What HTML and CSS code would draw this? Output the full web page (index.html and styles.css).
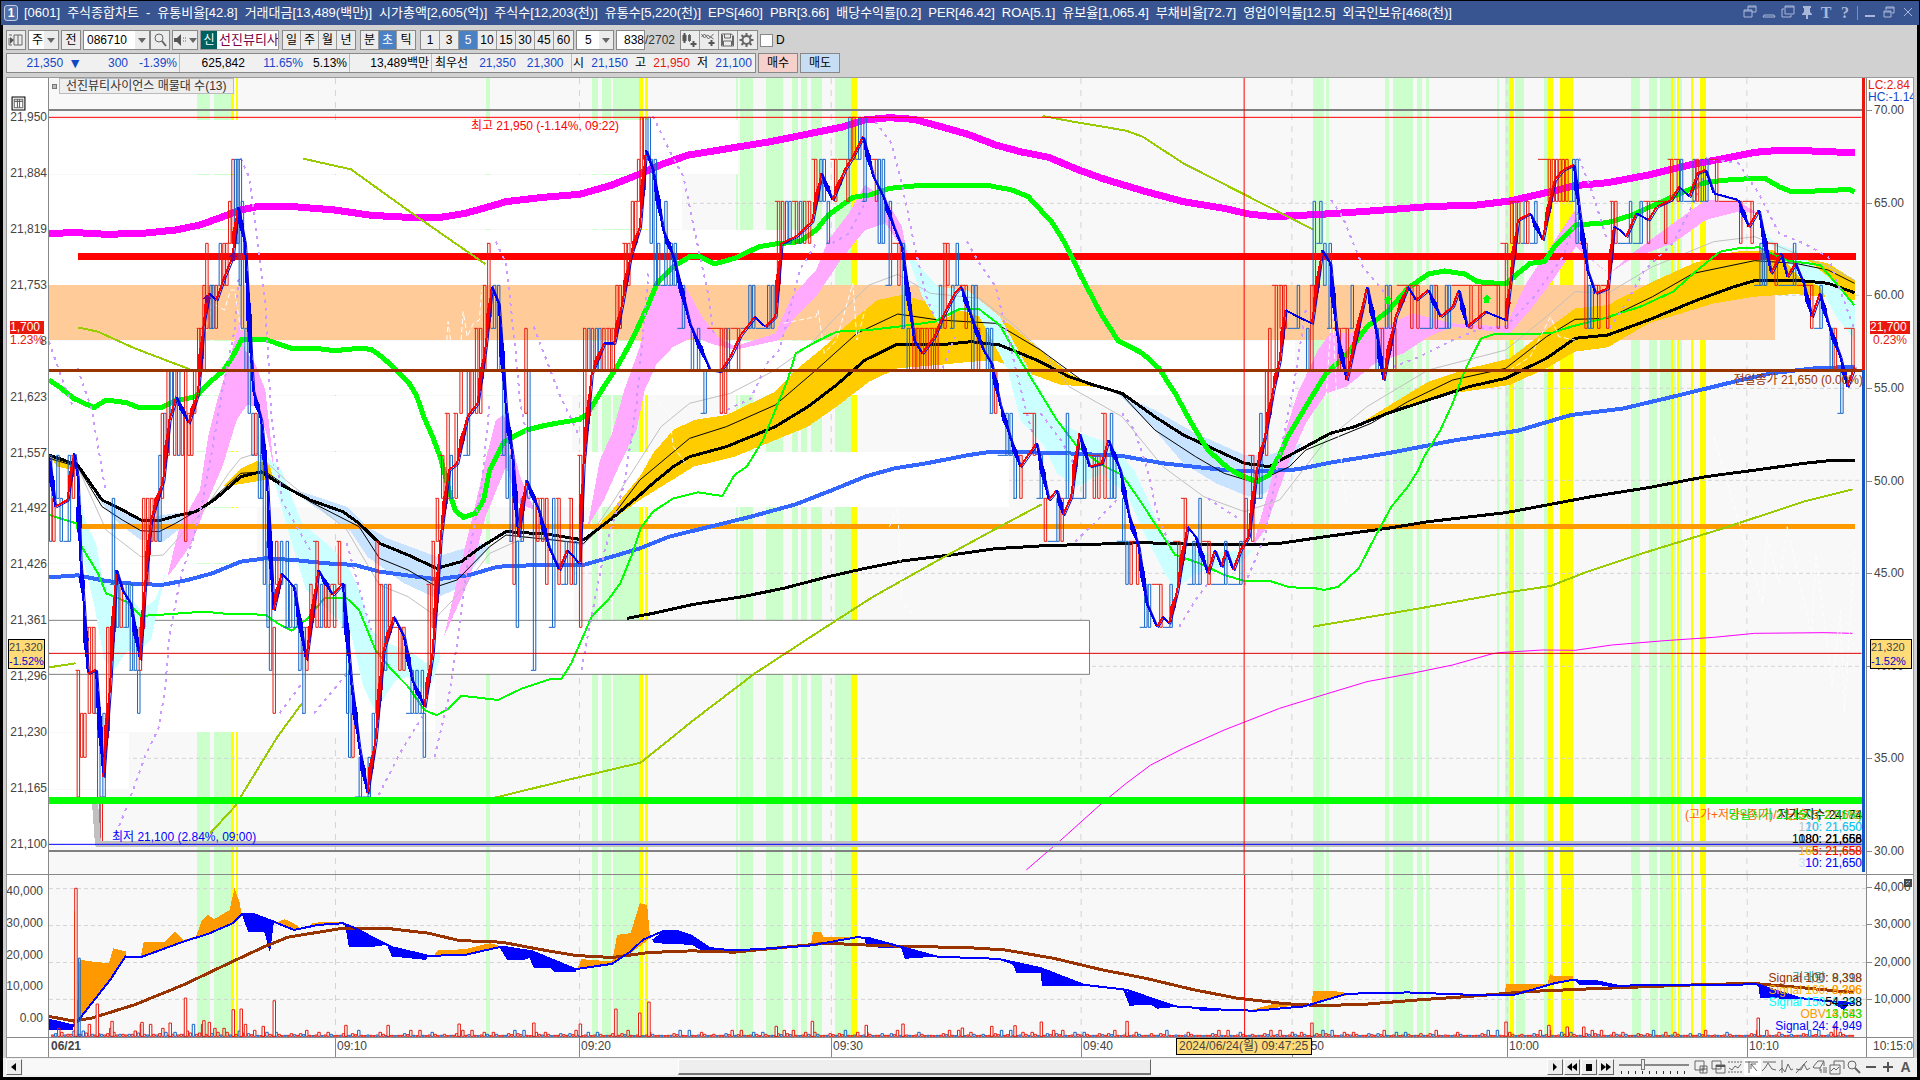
FILE: index.html
```html
<!DOCTYPE html>
<html lang="ko">

<head>
    <meta charset="utf-8">
    <title>[0601] 주식종합차트</title>
    <link rel="stylesheet" href="styles.css">
</head>

<body>
    <header class="titlebar">
        <span class="winNo">1</span>
        <h1><span>[0601]</span><span>주식종합차트</span><span>-</span><span>유통비율[42.8]</span><span>거래대금[13,489(백만)]</span><span>시가총액[2,605(억)]</span><span>주식수[12,203(천)]</span><span>유통수[5,220(천)]</span><span>EPS[460]</span><span>PBR[3.66]</span><span>배당수익률[0.2]</span><span>PER[46.42]</span><span>ROA[5.1]</span><span>유보율[1,065.4]</span><span>부채비율[72.7]</span><span>영업이익률[12.5]</span><span>외국인보유[468(천)]</span></h1>
        <div class="winButtons">
            <button type="button" aria-label="dock"><svg viewBox="0 0 14 14"><path d="M5 1h8v6H9M5 1v4M1 5h8v7H1zM1 6h8M5 2h8" /></svg></button>
            <button type="button" aria-label="hide"><svg viewBox="0 0 14 14"><path d="M2 10h10l1 2H1z" /></svg></button>
            <button type="button" aria-label="popup"><svg viewBox="0 0 14 14"><path d="M4 1h9v8H4zM4 2h9M3 4H1v8h9v-2" /></svg></button>
            <button type="button" aria-label="pin"><svg viewBox="0 0 14 14"><path class="solid" d="M3 1h8v2h-1v4l2 2v1H8v4H6v-4H2V9l2-2V3H3z" /></svg></button>
            <button type="button" class="serif">T</button>
            <button type="button" class="serif">?</button>
            <i></i>
            <button type="button" aria-label="minimize"><svg viewBox="0 0 14 14"><path class="solid" d="M2 10h10v2H2z" /></svg></button>
            <button type="button" aria-label="restore"><svg viewBox="0 0 14 14"><path d="M4 2h8v6h-2M4 2v3M4 3h8M2 6h7v6H2zM2 7h7" /></svg></button>
            <button type="button" aria-label="close"><svg viewBox="0 0 14 14"><path d="M3 3l8 8M11 3l-8 8" /></svg></button>
        </div>
    </header>

    <main class="window">
        <div class="toolbar">
            <button type="button" class="tool gapAfter" aria-label="menu"><svg viewBox="0 0 16 16"><path d="M1 3h3M6 3h8v10H6zM10 3v10M1 6v7M1 13h3" /><path class="solid" d="M2 5l4 3-4 4z" /></svg></button>
            <span class="combo comboKind"><select aria-label="종류">
                    <option>주</option>
                </select></span>
            <button type="button" class="tool gapAfter">전</button>
            <span class="combo comboCode"><input type="text" value="086710" aria-label="종목코드"></span>
            <button type="button" class="tool gapAfter" aria-label="search"><svg viewBox="0 0 16 16"><circle cx="7" cy="6" r="4" /><path stroke-width="2" d="M10 9l4 5" /></svg></button>
            <button type="button" class="tool speaker gapAfter" aria-label="sound"><svg viewBox="0 0 16 16"><path class="solid" d="M1 6h3l4-4v12l-4-4H1z" /><path d="M10 6h1M12 6h1M10 9h1M12 9h1" /></svg><b></b></button>
            <span class="stock"><em>신</em><strong>선진뷰티사</strong></span>
            <div class="group">
                <button type="button">일</button><button type="button">주</button><button type="button">월</button><button type="button">년</button>
            </div>
            <div class="group">
                <button type="button">분</button><button type="button" class="on">초</button><button type="button">틱</button>
            </div>
            <div class="group wide">
                <button type="button">1</button><button type="button">3</button><button type="button" class="on">5</button><button type="button">10</button><button type="button">15</button><button type="button">30</button><button type="button">45</button><button type="button">60</button>
            </div>
            <span class="combo comboStep"><select aria-label="간격">
                    <option>5</option>
                </select></span>
            <input type="text" class="count" value="838" aria-label="봉 개수"><span class="total">/2702</span>
            <div class="group wide icons">
                <button type="button" aria-label="add chart"><svg viewBox="0 0 16 16"><path class="solid" d="M1 3h4v6H1zM2 1h2v10H2z" /><path d="M8 2v8M9 3v6M7 3v6" /><path class="solid" d="M11 9h2v2h2v2h-2v2h-2v-2H9v-2h2z" /></svg></button>
                <button type="button" aria-label="add indicator"><svg viewBox="0 0 16 16"><path d="M1 5l3-3 4 5 5-5M1 2l3 4 3-3 6 4" /><path class="solid" d="M10 8h2v2h2v2h-2v2h-2v-2H8v-2h2z" /></svg></button>
                <button type="button" aria-label="save"><svg viewBox="0 0 16 16"><path d="M2 2h10l2 2v10H2zM5 2v4h6V2M4 14V9h8v5M3 3v10M13 4v9" /></svg></button>
                <button type="button" aria-label="settings"><svg viewBox="0 0 16 16"><circle cx="8" cy="8" r="4" stroke-width="2" /><path stroke-width="2" d="M8 1v3M8 12v3M1 8h3M12 8h3M3 3l2 2M11 11l2 2M3 13l2-2M11 5l2-2" /></svg></button>
            </div>
            <label class="check"><input type="checkbox">D</label>
        </div>

        <div class="quote">
            <div class="quoteBox">
                <span class="q1 down"><b>21,350</b><b class="mark">▼</b><b>300</b><b>-1.39%</b></span>
                <span class="q2"><b>625,842</b><b class="down">11.65%</b><b>5.13%</b></span>
                <span class="q3">13,489백만</span>
                <span class="q4">최우선 <b class="down">21,350</b> <b class="down">21,300</b></span>
                <span class="q5">시 <b class="down">21,150</b> 고 <b class="up">21,950</b> 저 <b class="down">21,100</b></span>
            </div>
            <button type="button" class="buy">매수</button>
            <button type="button" class="sell">매도</button>
        </div>

        <section class="chart">
            <div class="axis leftAxis">
                <svg class="gridIcon" viewBox="0 0 14 14"><path d="M1 1h12v12H1z" class="frame" /><path d="M3 3h8v8H3zM6 3v8M8 3v8M3 5h8" /></svg>
                <span>21,950</span><span>21,884</span><span>21,819</span><span>21,753</span><span>21,688</span><span>21,623</span><span>21,557</span><span>21,492</span><span>21,426</span><span>21,361</span><span>21,296</span><span>21,230</span><span>21,165</span><span>21,100</span>
                <div class="nowTag"><b>1,700</b><i>1.23%</i></div>
                <div class="crossTag">21,320<i>-1.52%</i></div>
            </div>

            <div class="plot">
                <svg id="price" viewBox="120 24 4453 2388" preserveAspectRatio="none"></svg>
                <span class="legend"><i></i><b>선진뷰티사이언스 매물대 수(13)</b></span>
                <span class="note high">최고 21,950 (-1.14%, 09:22)</span>
                <span class="note low">최저 21,100 (2.84%, 09:00)</span>
                <span class="note prev">전일종가 21,650 (0.00%)</span>
                <div class="values">
                    <p><span class="cOrange">(고가+저가+종가)/3 단순 5: 21,683</span><span class="cBlack">저가 지수 24: 74</span><span class="cGreen">당일시가 21,150 (-2.31%)</span></p>
                    <p><span class="cSilver">120: 21,650</span><span class="cSky">10: 21,650</span></p>
                    <p><span class="cBlack">1080: 21,668</span><span class="cBlack">180: 21,656</span></p>
                    <p><span class="cYellow">160: 21,658</span><span class="cRed">5: 21,658</span></p>
                    <p><span class="cPale">310: 21,650</span><span class="cBlue">10: 21,650</span></p>
                </div>
            </div>

            <div class="axis rightAxis">
                <div class="limits"><b class="up">LC:2.84</b><b class="down">HC:-1.14</b></div>
                <span>70.00</span><span>65.00</span><span>60.00</span><span>55.00</span><span>50.00</span><span>45.00</span><span>40.00</span><span>35.00</span><span>30.00</span>
                <div class="nowTag"><b>21,700</b><i>0.23%</i></div>
                <div class="crossTag">21,320<i>-1.52%</i></div>
            </div>

            <div class="axis leftAxis lower"><span>40,000</span><span>30,000</span><span>20,000</span><span>10,000</span><span>0.00</span></div>
            <div class="plot">
                <svg id="volume" viewBox="80 45 2968 487" preserveAspectRatio="none"></svg>
                <div class="values">
                    <p><span class="cTeal">거래량: 9,318</span><span class="cBrown">Signal 100: 8,398</span></p>
                    <p><span class="cYellow">Signal 160: 9,396</span><span class="cAmber">8,396</span></p>
                    <p><span class="cCyan">Signal 150: 9,298</span><span class="cBlack">54,238</span></p>
                    <p><span class="cAmber">OBV: 4,683</span><span class="cGreen">13,643</span></p>
                    <p><span class="cBlue">Signal 24: 4,949</span></p>
                </div>
            </div>
            <div class="axis rightAxis lower"><button type="button" class="closePane" aria-label="close pane">×</button><span>40,000</span><span>30,000</span><span>20,000</span><span>10,000</span></div>

            <div class="axis corner"></div>
            <div class="times">
                <b>06/21</b><span>09:10</span><span>09:20</span><span>09:30</span><span>09:40</span><span>09:50</span><span>10:00</span><span>10:10</span>
                <div class="dateTag">2024/06/24(월) 09:47:25</div>
            </div>
            <div class="axis corner end">10:15:0</div>
        </section>

        <footer class="bottom">
            <button type="button" class="raised" aria-label="scroll left"><svg viewBox="0 0 14 14"><path class="black" d="M9 3v8L4 7z" /></svg></button>
            <div class="track"><div class="thumb"></div></div>
            <button type="button" class="raised" aria-label="play"><svg viewBox="0 0 14 14"><path class="black" d="M5 3l4 4-4 4z" /></svg></button>
            <button type="button" class="raised" aria-label="rewind"><svg viewBox="0 0 14 14"><path class="black" d="M7 3v8L2 7zM12 3v8L7 7z" /></svg></button>
            <button type="button" class="raised" aria-label="stop"><svg viewBox="0 0 14 14"><path class="black" d="M4 4h6v7H4z" /></svg></button>
            <button type="button" class="raised" aria-label="forward"><svg viewBox="0 0 14 14"><path class="black" d="M2 3v8l5-4zM7 3v8l5-4z" /></svg></button>
            <div class="speed"><input type="range" min="0" max="9" value="3" aria-label="speed"></div>
            <div class="draw">
                <button type="button" aria-label="new"><svg viewBox="0 0 16 16"><path d="M2 2h9v9H2zM7 7h7v7H7zM10 7v7M7 10h7" /></svg></button>
                <button type="button" aria-label="copy"><svg viewBox="0 0 16 16"><path d="M2 2h9v8H2zM6 6h9v8H6z" /><path class="solid" d="M6 6h9v2H6z" /></svg></button>
                <button type="button" aria-label="range"><svg viewBox="0 0 16 16"><path stroke-dasharray="2 1" d="M1 3h14M1 13h14" /><path d="M2 9l3 2 3-4 3 2 3-4" /></svg></button>
                <button type="button" class="on" aria-label="cursor"><svg viewBox="0 0 16 16"><path d="M1 3h13M5 2v12M7 5l6 7M7 5h5M7 5v5" /></svg></button>
                <button type="button" aria-label="top line"><svg viewBox="0 0 16 16"><path d="M2 3h13M1 12l3-3 3-5 4 6 4 1" /></svg></button>
                <button type="button" aria-label="vertical line"><svg viewBox="0 0 16 16"><path d="M4 1v13M1 12l3-3 3 4 3-8 3 6 2-1" /></svg></button>
                <button type="button" aria-label="trend"><svg viewBox="0 0 16 16"><path d="M1 14L12 2M1 10l5 1 3-6 3 6 3-2" /></svg></button>
                <button type="button" aria-label="erase all"><svg viewBox="0 0 16 16"><path d="M1 8l5-6h6l-4 7H2zM8 9v3M12 3v4M9 14v-4M12 8v6M14 8v6" /></svg></button>
                <button type="button" aria-label="images"><svg viewBox="0 0 16 16"><path d="M5 2h10v8M1 6h10v9H1zM2 12l3-3 2 2 3-3M5 2v4" /></svg></button>
                <button type="button" aria-label="zoom"><svg viewBox="0 0 16 16"><circle cx="6" cy="6" r="4" /><path stroke-width="2" d="M9 9l5 5" /></svg></button>
                <button type="button" aria-label="smaller"><svg viewBox="0 0 16 16"><path class="solid" d="M3 7h10v2H3z" /></svg></button>
                <button type="button" aria-label="larger"><svg viewBox="0 0 16 16"><path class="solid" d="M3 7h4V3h2v4h4v2H9v4H7V9H3z" /></svg></button>
                <button type="button" class="auto">A</button>
            </div>
        </footer>
    </main>
    <script src="chart.js"></script>
</body>

</html>
```
FILE: styles.css
```css
* {
    box-sizing: border-box;
}

body {
    margin: 0;
    padding: 1px 1px 3px;
    height: 100vh;
    display: flex;
    flex-direction: column;
    background-color: #000;
    font-family: "Liberation Sans", "Noto Sans CJK KR", sans-serif;
    font-size: 12px;
    line-height: 14px;
    color: #000;
    overflow: hidden;
}

button,
input,
select {
    font: inherit;
    color: inherit;
    margin: 0;
    padding: 0;
}

b,
i,
em {
    font-weight: normal;
    font-style: normal;
}

svg {
    fill: none;
    stroke: #666;
}

svg .solid {
    fill: #555;
    stroke: none;
}

svg .black {
    fill: #000;
    stroke: none;
}

.up {
    color: #e8190c;
}

.down {
    color: #1446c8;
}

/* title bar */
.titlebar {
    height: 24px;
    display: flex;
    align-items: center;
    background-color: #395591;
    color: #fff;
    padding: 0 4px 0 3px;
    gap: 6px;
}

.titlebar h1 {
    flex: 1;
    display: flex;
    gap: 7px;
    margin: 0;
    font-size: 13px;
    font-weight: normal;
    white-space: nowrap;
    overflow: hidden;
}

.winNo {
    width: 14px;
    height: 16px;
    border: 1px solid #c5cfe5;
    border-radius: 3px;
    background-color: #5570a8;
    text-align: center;
    font-weight: bold;
}

.winButtons {
    display: flex;
    align-items: center;
    gap: 5px;
}

.winButtons button {
    width: 14px;
    height: 16px;
    border: 0;
    background: none;
    color: #a9b8d8;
}

.winButtons svg {
    width: 14px;
    height: 14px;
    stroke: #a9b8d8;
}

.winButtons .solid {
    fill: #a9b8d8;
}

.winButtons .serif {
    font-family: "Liberation Serif", serif;
    font-weight: bold;
    font-size: 16px;
}

.winButtons i {
    width: 1px;
    height: 14px;
    background-color: #8090a8;
}

/* toolbar */
.window {
    flex: 1;
    min-height: 0;
    margin: 0 2px;
    display: flex;
    flex-direction: column;
    background-color: #d1d1d1;
}

.toolbar {
    height: 28px;
    padding: 5px 3px 3px;
    display: flex;
    align-items: center;
}

.toolbar svg {
    width: 16px;
    height: 16px;
    display: block;
}

.tool,
.group {
    height: 20px;
    border: 1px solid #888;
    background-color: #ececec;
}

.tool {
    width: 20px;
    display: flex;
    align-items: center;
    justify-content: center;
}

.gapAfter {
    margin-right: 2px;
}

.speaker {
    width: 26px;
}

.speaker b,
.combo::after {
    border: 4px solid transparent;
    border-top: 5px solid #666;
    border-bottom: 0;
}

.combo {
    position: relative;
    height: 20px;
    border: 1px solid #888;
    background-color: #fff;
    margin-right: 2px;
}

.combo::after {
    content: "";
    position: absolute;
    right: 3px;
    top: 7px;
}

.combo select,
.combo input {
    width: 100%;
    height: 18px;
    border: 0;
    padding-left: 3px;
    appearance: none;
    background: linear-gradient(#ececec, #ececec) right / 14px 100% no-repeat;
}

.comboKind {
    width: 31px;
}

.comboCode {
    width: 67px;
    margin-right: 0;
}

.comboStep {
    width: 38px;
}

.comboStep select {
    padding-left: 8px;
}

.stock {
    display: flex;
    width: 79px;
    height: 20px;
    border: 1px solid #999;
    background-color: #fff;
    overflow: hidden;
    line-height: 18px;
    margin-right: 3px;
}

.stock em {
    width: 16px;
    flex: none;
    text-align: center;
    background-color: #006060;
    color: #fff;
}

.stock strong {
    font-weight: normal;
    color: #780046;
    padding-left: 2px;
    font-size: 13px;
    white-space: nowrap;
}

.group {
    display: flex;
    margin-right: 4px;
}

.group button {
    width: 18px;
    border: 0;
    border-right: 1px solid #999;
    background: none;
}

.wide {
    margin-right: 2px;
}

.wide button {
    width: 19px;
}

.group button:last-child {
    border-right: 0;
}

.group .on {
    background-color: #4a80c4;
    color: #fff;
}

.icons svg {
    width: 17px;
}

.count {
    width: 29px;
    height: 20px;
    border: 1px solid #888;
    text-align: right;
}

.total {
    width: 35px;
    color: #333;
}

.check {
    display: flex;
    align-items: center;
    gap: 3px;
}

.check input {
    appearance: none;
    width: 13px;
    height: 13px;
    border: 1px solid #888;
    background-color: #fff;
}

/* quote line */
.quote {
    height: 24px;
    padding: 0 3px 4px;
    display: flex;
    gap: 2px;
}

.quoteBox {
    display: flex;
    width: 750px;
    border: 1px solid #888;
    background-color: #f0f0f0;
    line-height: 18px;
    white-space: nowrap;
}

.quoteBox span {
    border-right: 1px solid #bbb;
    display: flex;
    justify-content: flex-end;
    gap: 5px;
    padding-right: 2px;
}

.quoteBox .q1 {
    width: 173px;
}

.q1 .mark {
    font-size: 14px;
}

.q1 b:nth-child(3) {
    width: 41px;
    text-align: right;
}

.q1 b:nth-child(4) {
    width: 44px;
    text-align: right;
}

.quoteBox .q2 {
    width: 170px;
    gap: 10px;
}

.q2 b:nth-child(2) {
    width: 48px;
    text-align: right;
}

.quoteBox .q3 {
    width: 82px;
}

.quoteBox .q4 {
    width: 140px;
    justify-content: flex-start;
    gap: 11px;
    padding-left: 3px;
}

.quoteBox .q5 {
    flex: 1;
    border-right: 0;
    justify-content: space-around;
}

.quote button {
    width: 40px;
    border: 1px solid #888;
    background-color: #f6d0ca;
}

.quote .sell {
    background-color: #c6ddf4;
}

/* chart */
.chart {
    flex: 1;
    min-height: 0;
    display: grid;
    grid-template-columns: 42px minmax(0, 1fr) 47px;
    grid-template-rows: minmax(0, 1fr) 163px 19px;
    margin: 0 3px;
    border: 1px solid #999;
    background-color: #fff;
}

.plot {
    position: relative;
    background-color: #f8f8f8;
    border-bottom: 1px solid #888;
    overflow: hidden;
}

.plot svg {
    position: absolute;
    width: 100%;
    height: 100%;
    shape-rendering: crispEdges;
}

.plot svg * {
    vector-effect: non-scaling-stroke;
}

.axis {
    position: relative;
    display: flex;
    flex-direction: column;
    justify-content: space-between;
    border-bottom: 1px solid #888;
    color: #444;
    overflow: hidden;
}

.leftAxis {
    border-right: 1px solid #888;
    padding: 32px 1px 23px 0;
    text-align: right;
}

.leftAxis.lower {
    padding: 9px 5px 12px 0;
}

.leftAxis.lower span {
    margin-left: -6px;
}

.rightAxis {
    border-left: 1px solid #888;
    padding: 25px 0 16px 7px;
}

.rightAxis.lower {
    padding: 5px 0 31px 7px;
}

.rightAxis span {
    position: relative;
}

.rightAxis span::before {
    content: "";
    position: absolute;
    left: -7px;
    top: 7px;
    width: 5px;
    height: 1px;
    background-color: #888;
}

.gridIcon {
    position: absolute;
    left: 4px;
    top: 18px;
    width: 15px;
    height: 15px;
}

.gridIcon .frame {
    stroke: #000;
}

.limits {
    position: absolute;
    left: 1px;
    top: 1px;
    white-space: nowrap;
    line-height: 12px;
}

.limits b {
    display: block;
}

.nowTag,
.crossTag {
    position: absolute;
    left: 3px;
    width: 34px;
    text-align: left;
    line-height: 13px;
}

.nowTag {
    top: 243px;
    color: #e8190c;
}

.nowTag b,
.nowTag i,
.crossTag i {
    display: block;
}

.nowTag b {
    background-color: #e8190c;
    color: #fff;
}

.nowTag i {
    width: 31px;
    background-color: #fff;
}

.crossTag {
    top: 561px;
    left: 1px;
    width: 37px;
    border: 1px solid #000;
    background-color: #ffdc78;
    font-size: 11px;
    white-space: nowrap;
    line-height: 14px;
}

.crossTag i {
    color: #00c;
}

.rightAxis .nowTag {
    width: 40px;
}

.rightAxis .nowTag i {
    width: 40px;
    padding-left: 3px;
}

.rightAxis .crossTag {
    left: 3px;
    width: 42px;
}

.closePane {
    position: absolute;
    right: 1px;
    top: 4px;
    width: 8px;
    height: 8px;
    border: 0;
    background-color: #444;
    color: #fff;
    font-size: 9px;
    line-height: 7px;
}

.legend {
    position: absolute;
    left: 3px;
    top: 0;
    display: flex;
    align-items: center;
    gap: 2px;
    color: #333;
}

.legend i {
    width: 5px;
    height: 5px;
    border: 1px solid #777;
    background-color: #bbb;
}

.legend b {
    border: 1px solid #bbb;
    background-color: #eee;
    padding: 0 6px;
}

.note {
    position: absolute;
}

.high {
    left: 23%;
    top: 41px;
    padding-left: 4px;
    color: #f00;
}

.low {
    left: 63px;
    bottom: 30px;
    color: #00f;
}

.prev {
    right: 3px;
    top: 295px;
    color: #930;
}

.values {
    position: absolute;
    right: 4px;
    bottom: 5px;
    line-height: 12px;
}

.values p {
    display: grid;
    margin: 0;
    justify-items: end;
}

.values span {
    grid-area: 1 / 1;
}

.cOrange { color: #ff6600; }
.cAmber { color: #ff9900; }
.cYellow { color: #ffb400; }
.cBlack { color: #000; }
.cGreen { color: #00e600; }
.cSilver { color: #c0c0c0; }
.cSky { color: #00ccff; }
.cCyan { color: #00ffff; }
.cRed { color: #f00; }
.cPale { color: #c8e3ff; }
.cBlue { color: #00f; }
.cTeal { color: #339999; }
.cBrown { color: #993300; }

.corner {
    border: 0;
    border-right: 1px solid #888;
}

.end {
    border-left: 1px solid #888;
    border-right: 0;
    padding: 1px 0 0 6px;
    white-space: nowrap;
}

.times {
    position: relative;
    display: grid;
    grid-template-columns: 286fr 244fr 252fr 250fr 211fr 215fr 240fr 119fr;
    color: #444;
    line-height: 17px;
}

.times > b {
    font-weight: bold;
    padding-left: 2px;
}

.times span {
    border-left: 1px solid #888;
    padding-left: 1px;
}

.dateTag {
    position: absolute;
    left: 62%;
    top: 0;
    width: 136px;
    height: 17px;
    border: 1px solid #000;
    background-color: #ffdc78;
    line-height: 14px;
    text-align: center;
    white-space: nowrap;
}

/* scroll bar and drawing tools */
.bottom {
    height: 19px;
    padding: 1px 3px 2px;
    display: flex;
    background-color: #f0f0f0;
}

.raised {
    width: 16px;
    border: 1px solid #fff;
    border-right-color: #666;
    border-bottom-color: #666;
    background-color: #eee;
    margin-right: 1px;
}

.raised svg {
    width: 14px;
    height: 14px;
    display: block;
}

.track {
    flex: 1;
    background-color: #f8f8f8;
}

.thumb {
    width: 31%;
    height: 100%;
    margin-left: 43%;
    border: 1px solid #fff;
    border-right-color: #666;
    border-bottom: 2px solid #777;
    background-color: #eee;
}

.speed {
    width: 70px;
    margin: 0 4px;
    background: repeating-linear-gradient(to right, #333 0 1px, transparent 1px 7px) 2px 12px / 100% 3px no-repeat;
}

.speed input {
    appearance: none;
    display: block;
    width: 100%;
    height: 11px;
    background: linear-gradient(#888, #888) center / 100% 2px no-repeat;
}

.speed input::-webkit-slider-thumb {
    appearance: none;
    width: 4px;
    height: 11px;
    border: 1px solid #777;
    background-color: #eee;
}

.draw {
    display: flex;
}

.draw button {
    width: 17px;
    border: 0;
    background: none;
}

.draw .on {
    background-color: #fff;
}

.draw svg {
    width: 16px;
    height: 16px;
    display: block;
}

.draw .auto {
    font-weight: bold;
    font-size: 14px;
    color: #555;
}
```
FILE: chart.js
```js
var NS = 'http://www.w3.org/2000/svg';
var price = document.getElementById('price');
var volume = document.getElementById('volume');

function add(svg, tag, attrs) {
    var el = document.createElementNS(NS, tag);
    for (var key in attrs) {
        el.setAttribute(key, attrs[key]);
    }
    svg.appendChild(el);
}

function rect(svg, x1, y1, x2, y2, fill, stroke) {
    add(svg, 'rect', { x: x1, y: y1, width: x2 - x1, height: y2 - y1, fill: fill, stroke: stroke || 'none' });
}

function line(svg, points, color, width, dash) {
    add(svg, 'polyline', { points: points, stroke: color, 'stroke-width': width || 1, 'stroke-dasharray': dash || 'none', 'stroke-linejoin': 'round' });
}

function area(svg, points, color) {
    add(svg, 'polygon', { points: points, fill: color, stroke: 'none' });
}

// signal bands: x from, x to
var green = [[483, 514], [524, 566], [1191, 1200], [1450, 1465], [1475, 1497], [1502, 1566], [1803, 1808], [1813, 1845], [1877, 1918], [1940, 1955], [1962, 1977], [1987, 2014], [2046, 2086], [3217, 3244], [3249, 3256], [3393, 3403], [3413, 3462], [3472, 3486], [3494, 3503], [3668, 3673], [3688, 3698], [3714, 3736], [3783, 3793], [3998, 4020], [4042, 4062], [4067, 4095], [4101, 4107], [4115, 4121]];
var yellow = [[567, 574], [578, 583], [1566, 1575], [1580, 1588], [2086, 2100], [3699, 3710], [3793, 3806], [3824, 3856], [4094, 4100], [4111, 4115], [4143, 4148], [4167, 4180]];

green.forEach(function (b) {
    rect(price, b[0], 0, b[1], 2420, '#ccffcc');
    rect(volume, b[0] / 1.5, 0, b[1] / 1.5, 540, '#ccffcc');
});
yellow.forEach(function (b) {
    rect(price, b[0], 0, b[1], 2420, '#ffff00');
    rect(volume, b[0] / 1.5, 0, b[1] / 1.5, 540, '#ffff00');
});

// grid
[822, 1420, 2037, 2649, 3166, 3693, 4281].forEach(function (x) {
    line(price, x + ',24 ' + x + ',2412', '#d4d4d4', 1, '6 6');
    line(volume, x / 1.5 + ',45 ' + x / 1.5 + ',532', '#d4d4d4', 1, '6 6');
});
[400, 676, 955, 1231, 1510, 1789, 2065].forEach(function (y) {
    line(price, '120,' + y + ' 4564,' + y, '#d4d4d4', 1, '4 3');
});
[86, 197, 308, 419].forEach(function (y) {
    line(volume, '80,' + y + ' 3048,' + y, '#d4d4d4', 1, '4 3');
});

// volume profile: top, bottom, right end
[[150, 312, 1808], [315, 477, 1671], [480, 644, 2030], [645, 810, 4351], [813, 975, 3174], [978, 1143, 1402], [1146, 1311, 2472], [1314, 1479, 630], [1482, 1649, 1407], [1651, 1813, 2670], [1815, 1985, 1065], [1988, 2156, 316], [2159, 2326, 235]].forEach(function (p, i) {
    rect(price, 119, p[0], p[2], p[1], i === 3 ? '#ffcc99' : '#fff', i === 9 ? '#808080' : 'none');
});

// clouds between the averages
area(price, '230,1270 300,1320 345,1345 430,1330 500,1320 400,1415 345,1410 290,1360', '#c8e3ff');
area(price, '700,1250 850,1310 900,1370 950,1405 1070,1460 1180,1420 1200,1430 1120,1555 1070,1585 990,1540 900,1460 860,1385', '#c8e3ff');
area(price, '2740,970 2830,1020 2930,1090 3050,1155 3110,1155 3190,1120 3160,1190 3100,1270 3060,1280 2980,1240 2900,1180 2830,1080', '#c8e3ff');
area(price, '120,1155 180,1175 197,1205 140,1190', '#ffcc00');
area(price, '545,1250 590,1195 630,1173 655,1180 690,1230 650,1230 600,1240', '#ffcc00');
area(price, '1440,1400 1500,1320 1568,1220 1600,1150 1650,1080 1700,1050 1780,1035 1900,965 1950,900 2020,830 2080,760 2150,690 2210,675 2270,695 2350,715 2400,720 2470,760 2550,840 2620,910 2680,950 2600,945 2500,900 2440,872 2380,875 2300,885 2200,895 2130,935 2050,1010 1980,1070 1900,1110 1800,1160 1700,1190 1568,1290', '#ffcc00');
area(price, '3320,1070 3400,1010 3500,935 3600,895 3700,865 3790,780 3860,715 3940,705 4050,635 4150,580 4250,545 4340,540 4400,560 4480,580 4545,630 4545,690 4400,672 4300,680 4200,700 4040,760 3940,832 3860,845 3790,895 3700,945 3560,970 3400,1035', '#ffcc00');
area(price, '187,1190 205,1340 235,1420 250,1520 300,1560 345,1620 380,1590 405,1510 370,1710 345,1740 310,1745 280,1800 255,1770 230,1600 200,1450', '#ccffff');
area(price, '655,1160 690,1200 740,1360 800,1420 850,1480 880,1560 910,1680 950,1720 1000,1740 1045,1780 1075,1740 1080,1760 1050,1870 1000,1820 970,1830 920,1925 890,1850 860,1690 820,1640 750,1560 710,1400', '#ccffff');
area(price, '2210,510 2260,600 2300,650 2370,660 2450,740 2490,830 2550,960 2600,1060 2650,1090 2720,1120 2780,1200 2810,1280 2850,1400 2900,1430 2960,1450 3070,1440 3040,1480 2960,1500 2930,1510 2880,1560 2850,1500 2800,1380 2760,1270 2700,1210 2640,1250 2590,1210 2560,1130 2500,1050 2470,900 2400,740 2350,720 2300,760 2260,680', '#ccffff');
area(price, '4310,460 4350,520 4400,540 4440,580 4500,640 4545,700 4545,810 4500,740 4460,650 4410,620 4350,545', '#ccffff');
area(price, '410,1520 440,1370 490,1260 510,1100 530,1000 560,880 590,740 600,840 625,880 650,960 672,1200 655,1100 630,1010 605,1005 580,1050 545,1190 510,1290 470,1420 430,1490', '#ffaaff');
area(price, '1088,1700 1130,1480 1160,1330 1190,1170 1215,1050 1235,1035 1255,1130 1275,1220 1310,1320 1270,1300 1240,1190 1190,1340 1150,1530 1110,1640', '#ffaaff');
area(price, '1440,1370 1470,1170 1500,1090 1530,960 1568,830 1590,700 1620,645 1680,650 1720,740 1760,800 1800,830 1900,790 1940,680 2000,600 2030,510 2080,430 2120,345 2170,385 2210,470 2225,560 2170,460 2120,480 2060,570 2000,680 1950,740 1910,810 1800,840 1740,820 1700,800 1650,830 1610,880 1580,960 1560,1080 1520,1180 1480,1290', '#ffaaff');
area(price, '3070,1430 3136,1140 3180,970 3230,840 3260,790 3300,790 3400,770 3460,730 3560,760 3690,770 3740,640 3800,530 3860,420 3880,540 3920,590 3945,610 4000,550 4100,460 4180,390 4260,395 4310,430 4260,425 4180,450 4100,520 4000,565 3945,610 3900,570 3862,530 3800,640 3750,720 3700,790 3560,770 3500,800 3440,850 3370,880 3300,950 3250,970 3200,1060 3160,1170 3100,1380', '#ffaaff');

// candles: x, high step, low step (one step is 50 won), colour
var step = [142, 268, 394, 520, 646, 775, 900, 1030, 1156, 1285, 1414, 1543, 1672, 1801, 1930, 2062, 2181, 2322];
var candles = '124 8 10 b,132 9 10 r,142 8 9 b,150 9 10 b,170 8 10 b,180 8 9 r,192 13 16 r,200 14 15 r,208 14 15 r,219 12 14 r,230 12 14 r,236 13 14 b,242 14 17 b,248 16 17 r,255 14 16 b,264 12 14 r,278 9 11 b,288 11 12 b,297 11 12 r,312 11 12 b,322 11 13 b,332 12 13 b,340 13 14 b,344 12 13 r,352 9 12 r,362 9 11 r,372 9 10 r,382 9 10 r,392 8 10 b,398 7 9 r,404 7 8 b,412 6 8 r,420 6 7 b,428 6 8 r,438 6 8 b,447 7 8 r,455 6 10 r,463 7 8 r,470 7 8 r,477 6 7 r,487 5 6 r,493 5 6 r,500 4 6 r,507 3 5 r,517 4 5 b,522 4 5 b,530 4 5 r,540 3 4 b,549 3 4 r,556 3 4 r,563 2 3 r,571 1 3 r,578 1 3 b,583 1 3 b,589 1 4 b,594 2 5 b,603 5 6 b,611 5 7 b,620 7 8 b,627 7 8 r,636 7 9 b,642 8 9 b,648 8 11 b,657 10 12 b,663 11 13 b,672 12 14 r,678 10 11 r,690 10 11 b,704 10 12 b,712 11 12 b,725 11 12 b,735 12 13 b,745 12 14 b,752 12 13 r,762 11 12 r,777 10 12 r,788 11 12 b,798 11 12 r,806 11 12 r,820 11 12 r,832 10 11 r,844 11 12 b,852 12 14 b,857 13 15 b,865 14 15 r,883 15 16 b,905 15 16 b,915 14 15 b,924 10 14 r,935 11 13 r,945 11 13 b,955 11 12 r,980 12 13 r,990 12 13 r,1010 13 14 b,1022 13 14 b,1035 13 14 b,1040 14 15 b,1052 11 13 r,1062 10 12 r,1072 9 10 r,1085 8 9 r,1098 7 9 r,1106 8 9 b,1118 7 9 r,1130 6 7 r,1148 6 8 b,1157 6 7 r,1168 5 7 r,1178 5 7 r,1188 4 6 r,1198 3 5 r,1212 4 5 b,1222 4 6 b,1235 6 8 b,1243 7 9 b,1253 8 10 b,1260 9 11 r,1268 10 12 b,1280 9 10 b,1289 5 7 r,1296 6 9 b,1310 9 13 b,1318 9 10 r,1330 9 10 r,1340 9 11 r,1357 9 12 b,1370 9 11 r,1388 10 11 b,1400 9 11 r,1410 10 11 b,1423 8 12 r,1433 5 8 r,1443 5 6 b,1452 5 6 r,1462 5 6 b,1470 5 6 b,1480 5 6 r,1493 5 6 r,1503 5 6 r,1512 4 5 r,1520 4 5 r,1533 3 4 r,1541 3 4 r,1550 2 3 r,1558 2 3 r,1565 1 2 r,' +
    '1572 0 2 r,1580 0 1 b,1591 0 1 b,1596 1 3 b,1606 1 4 b,1614 3 4 b,1632 2 4 b,1645 3 4 b,1655 3 4 b,1675 4 5 b,1697 5 6 b,1712 5 6 b,1728 6 7 b,1768 5 7 r,1778 5 7 r,1785 5 6 b,1810 5 6 r,1838 4 5 b,1847 4 5 b,1884 4 5 b,1894 4 5 b,1908 2 4 r,1918 2 3 r,1928 2 3 b,1936 2 3 b,1952 2 3 r,1962 2 3 b,1972 2 3 r,1984 2 3 r,1999 1 2 r,2012 1 2 b,2020 1 2 b,2030 2 3 b,2048 1 2 r,2078 1 2 r,2083 0 1 b,2093 0 1 r,2107 0 1 b,2120 0 2 b,2148 1 2 r,2155 1 3 b,2165 1 3 b,2182 2 4 b,2203 3 4 r,2214 3 5 b,2226 5 6 b,2240 5 6 r,2250 5 6 r,2260 5 6 r,2272 5 6 r,2285 5 6 r,2296 5 6 r,2305 4 5 b,2316 3 5 r,2323 3 4 r,2335 4 5 b,2346 3 4 b,2368 4 5 r,2384 4 6 b,2392 4 5 b,2398 5 6 r,2420 5 6 b,2430 5 7 b,2440 6 7 r,2468 7 8 b,2478 7 8 b,2488 8 9 b,2502 8 9 r,2535 7 8 r,2552 8 9 b,2562 9 10 r,2593 9 10 b,2603 9 10 r,2616 7 9 b,2658 8 9 b,2682 8 9 r,2693 8 9 r,2708 7 9 r,2724 7 9 b,2732 8 9 b,2754 9 10 b,2762 10 11 b,2772 10 11 r,2788 10 11 r,2808 11 12 b,2817 11 12 b,2845 11 12 r,2870 11 12 b,2889 10 11 r,2905 9 10 r,2926 10 11 b,2941 9 11 b,2963 10 11 r,3004 10 11 b,3041 10 11 b,3054 9 10 b,3070 8 10 r,3090 7 9 b,3104 6 8 r,3112 5 7 r,3128 4 6 r,' +
    '3140 4 5 r,3150 4 5 r,3182 4 5 b,3205 5 6 b,3215 4 6 r,3221 2 4 b,3237 2 3 b,3247 3 4 b,3260 3 5 b,3282 5 6 r,3302 5 6 r,3314 4 5 b,3375 5 6 b,3388 5 6 r,3398 4 5 b,3407 4 5 b,3418 5 6 r,3460 4 5 r,3475 4 5 r,3508 4 5 b,3520 4 5 r,3545 4 5 b,3552 4 5 b,3605 4 5 r,3627 4 5 r,3672 4 5 r,3692 3 5 r,3705 2 3 r,3712 2 3 r,3722 2 3 r,3738 2 3 b,3744 2 3 r,3764 2 3 b,3797 1 2 r,3807 1 2 r,3815 1 2 r,3823 1 2 r,3831 1 2 r,3840 1 2 r,3857 1 2 b,3865 1 3 b,3887 3 5 r,3895 4 5 b,3902 4 5 b,3918 4 5 r,3940 4 5 r,3952 2 3 r,3960 2 3 r,3996 2 3 b,4022 2 3 b,4040 2 3 r,4082 2 3 r,4097 1 2 r,4113 1 2 r,4121 1 2 b,4152 1 2 b,4160 1 2 r,4172 1 2 b,4183 1 2 b,4207 1 2 r,4266 2 3 r,4294 2 3 r,4316 3 4 b,4327 3 4 b,4353 3 4 r,4398 3 4 b,4440 4 5 r,4463 4 5 b,4488 5 6 b,4498 5 6 r,4514 6 7 b,4541 5 6 r';

// averages
line(price, '190,1190 260,1380 345,1460 400,1455 500,1320 560,1210 590,1165 630,1150 700,1230 850,1380 930,1545 1000,1580 1070,1640 1110,1590 1200,1450 1300,1395 1430,1425 1500,1300 1568,1170 1620,1070 1690,1000 1790,970 1900,900 1980,830 2050,740 2130,645 2200,613 2280,670 2400,685 2480,760 2560,850 2620,950 2750,1040 2850,1190 2950,1280 3050,1325 3136,1290 3250,1110 3350,1010 3500,900 3690,840 3790,740 3860,665 3940,670 4050,590 4200,515 4300,500 4400,550 4480,590 4545,630', '#c0c0c0', 1);
line(price, '190,1369 4545,1369', '#ff9900', 5);
line(price, '1537,1645 1600,1630 1700,1603 1820,1580 1920,1555 2030,1520 2120,1495 2210,1473 2330,1455 2440,1436 2560,1427 2700,1422 2800,1418 2950,1424 3080,1424 3136,1420 3260,1398 3400,1375 3500,1355 3690,1328 3800,1303 3900,1280 4040,1253 4180,1220 4310,1199 4420,1180 4500,1170 4545,1170', '#000', 3);
line(price, '120,1522 190,1516 260,1533 340,1543 400,1544 460,1530 520,1510 590,1475 650,1465 720,1470 800,1480 870,1485 930,1505 1070,1528 1150,1515 1220,1490 1300,1486 1430,1485 1500,1460 1568,1435 1640,1400 1740,1370 1840,1340 1950,1303 2040,1260 2120,1220 2192,1195 2270,1180 2370,1156 2430,1145 2600,1149 2750,1158 2850,1180 3000,1200 3080,1205 3180,1198 3260,1178 3400,1150 3560,1112 3720,1082 3850,1035 3980,1015 4100,980 4250,935 4340,910 4460,893 4545,892', '#3366ff', 4);
line(price, '120,1155 190,1185 250,1290 300,1320 345,1350 390,1352 430,1338 480,1325 530,1285 590,1220 640,1205 690,1245 760,1290 840,1325 880,1360 930,1420 1000,1455 1070,1495 1130,1475 1180,1430 1240,1385 1340,1392 1430,1410 1500,1345 1568,1275 1600,1240 1650,1190 1690,1160 1780,1130 1900,1070 1980,1010 2050,945 2120,870 2200,822 2300,825 2380,815 2450,825 2540,870 2620,920 2680,945 2750,970 2830,1040 2900,1095 2980,1140 3050,1180 3110,1190 3136,1172 3200,1130 3260,1090 3320,1070 3400,1030 3500,990 3600,950 3690,925 3790,865 3860,805 3940,795 4040,750 4160,690 4250,650 4300,632 4400,630 4480,640 4545,668', '#000', 3);
line(price, '120,1165 190,1190 250,1310 300,1350 345,1382 390,1385 430,1360 500,1310 590,1210 650,1205 760,1295 880,1370 930,1465 1000,1500 1070,1550 1120,1530 1200,1430 1240,1395 1430,1420 1500,1340 1568,1230 1690,1105 1780,1070 1900,1005 2000,900 2100,790 2200,732 2300,750 2440,760 2550,840 2650,930 2750,975 2830,1080 2930,1160 3000,1210 3076,1238 3160,1190 3200,1140 3360,1060 3450,995 3560,930 3690,895 3790,800 3860,748 3940,745 4050,680 4150,610 4300,572 4400,580 4480,600 4545,640', '#000', 1);
line(price, '190,559 4548,559', '#ff0000', 7);
line(price, '120,1335 187,1360 200,1430 240,1510 260,1570 310,1595 345,1638 420,1632 500,1625 560,1632 650,1634 680,1660 715,1682 750,1650 795,1585 850,1585 880,1620 920,1740 960,1800 1000,1850 1040,1920 1070,1936 1100,1915 1130,1877 1220,1890 1280,1855 1350,1827 1375,1828 1400,1780 1425,1710 1450,1640 1490,1590 1520,1540 1550,1450 1570,1375 1600,1325 1650,1285 1710,1267 1770,1278 1800,1215 1830,1190 1870,1110 1890,1050 1910,990 1930,930 1950,850 2000,815 2050,785 2130,780 2200,770 2290,755 2350,718 2400,718 2450,765 2490,850 2540,950 2590,1050 2640,1130 2700,1185 2750,1215 2790,1285 2830,1360 2880,1455 2940,1480 3000,1515 3048,1532 3110,1532 3160,1552 3220,1554 3245,1560 3280,1550 3330,1495 3370,1400 3410,1310 3450,1250 3476,1200 3490,1160 3530,1080 3560,1000 3590,900 3630,805 3660,793 3800,790 3850,770 3930,745 4020,710 4100,665 4160,600 4215,545 4260,535 4310,532 4380,572 4460,585 4500,640 4544,705', '#00ff00', 2);
line(price, '120,490 190,488 260,493 350,490 430,480 490,465 540,443 590,420 630,410 710,409 820,420 910,436 1000,442 1080,442 1140,430 1190,413 1240,395 1330,382 1420,373 1500,345 1568,312 1590,300 1628,280 1688,255 1788,235 1888,215 1988,190 2068,170 2118,150 2180,143 2240,148 2300,168 2370,192 2440,225 2500,245 2570,262 2640,298 2700,325 2800,362 2900,395 3000,415 3060,432 3120,440 3236,433 3336,425 3500,410 3620,405 3700,393 3800,365 3860,347 3940,338 4040,315 4140,285 4240,262 4300,247 4370,240 4440,243 4500,246 4547,247', '#ff00ff', 7);
line(price, '120,930 150,955 180,985 230,1013 260,990 310,998 340,1013 395,1013 430,992 480,980 520,930 545,905 570,860 592,808 650,808 690,825 715,835 780,836 820,842 880,835 910,838 940,865 975,905 1000,935 1020,975 1040,1045 1060,1100 1080,1165 1100,1260 1115,1320 1135,1342 1165,1330 1185,1290 1200,1200 1235,1115 1290,1080 1340,1065 1420,1048 1440,1030 1480,950 1510,895 1540,830 1568,760 1590,700 1610,640 1650,590 1690,560 1715,560 1750,582 1800,565 1860,530 1900,522 1960,515 2000,480 2030,435 2090,382 2130,375 2180,355 2240,348 2420,346 2480,360 2520,380 2580,460 2610,520 2650,620 2700,735 2740,812 2800,850 2840,895 2880,970 2920,1060 2960,1140 3010,1195 3040,1215 3080,1235 3110,1215 3136,1155 3156,1100 3200,1010 3250,910 3300,855 3350,770 3400,725 3450,655 3500,612 3540,603 3590,612 3620,635 3690,642 3720,610 3750,580 3785,575 3810,530 3862,465 3940,458 4000,435 4100,380 4180,337 4250,328 4325,325 4360,350 4390,365 4480,362 4530,358 4545,365', '#00ff00', 5);
line(price, '2515,2400 2600,2310 2700,2200 2760,2140 2820,2085 2900,2035 3000,1980 3136,1915 3250,1872 3350,1835 3460,1810 3560,1785 3655,1752 3673,1748 3780,1740 3860,1741 3950,1725 4080,1712 4200,1702 4300,1690 4470,1688 4540,1690', '#ff00ff', 1);

// supports, drawn as short ticks
['190,772 240,785 330,835 465,898', '743,266 860,298 1010,430 1190,583', '120,1792 185,1780', '515,2290 575,2210 600,2160 680,2000 740,1900', '1213,2183 1390,2130 1570,2078 1700,1950 1850,1810 2000,1690 2140,1580 2300,1470 2450,1370 2553,1303', '2555,138 2630,155 2760,182 2800,200 2900,280 3060,380 3217,478', '3217,1670 3480,1615 3690,1568 3800,1548 3890,1505 4020,1452 4210,1380 4420,1295 4540,1258'].forEach(function (p) {
    line(price, p, '#99cc00', 2);
});

// parabolic dots
['120,815 150,920 180,1015', '190,895 225,1020 250,1200 258,1260', '285,2290 320,2180 355,2060 390,1970 405,1850 415,1700 430,1600 445,1510 470,1420 495,1300 520,1140 545,960 575,780 585,620', '590,265 610,320 628,480 650,700 665,1040 690,1290 760,1440', '685,1930 740,1840', '770,1930 850,1810', '850,1420 890,1600 910,1680', '928,2175 980,2050 1035,1940', '1065,2060 1100,1880 1125,1680 1145,1480 1180,1250 1200,1000', '1215,515 1240,580 1260,800 1275,1000 1290,1090', '1308,770 1370,970 1420,1100', '1425,1800 1440,1700 1480,1450 1530,1240 1560,1000 1590,600', '1600,138 1640,240 1675,320 1700,470 1735,670 1750,800', '1765,1030 1840,985 1880,880 1910,840 1930,750 1960,600 2000,520', '2040,520 2080,490 2120,400', '2145,155 2185,220 2210,340 2240,520 2270,680 2290,740', '2310,895 2340,800', '2370,515 2400,580 2440,650 2470,800 2510,1000 2530,1090', '2550,1030 2600,1110 2640,1200', '2635,1415 2690,1350 2740,1285', '2750,1030 2780,1080 2810,1190 2840,1350 2870,1430', '2890,1670 2930,1590 2960,1540', '2960,1285 3040,1350', '3050,1545 3100,1400 3136,1160 3170,950 3200,720', '3262,390 3290,440 3340,590 3395,670', '3395,900 3480,860 3560,810 3630,775 3690,770 3760,680 3830,560 3870,420', '3870,265 3900,360 3940,515', '3945,775 3990,690 4030,600 4100,520 4150,400 4180,300', '4180,265 4260,280 4310,370 4360,490 4420,520 4480,560 4545,780'].forEach(function (p) {
    line(price, p, '#cc99ff', 2, '3 5');
});

// lagging line, almost invisible on the light background
['500,810 520,700 550,720 565,660 575,660 590,780', '1095,810 1098,755 1104,810', '1130,810 1135,725 1145,800 1160,760 1175,750 1180,660', '1920,760 2000,740 2005,720 2020,850 2050,810 2090,640 2100,810 2120,720', '1600,980 1640,1030 1650,1130 1680,1180', '2180,1370 2200,1310 2210,1590 2240,1640', '3250,980 3265,700 3280,1100 3300,1300', '3700,900 3750,860 3800,740 3820,800 3860,810', '4200,1100 4320,1600 4330,1400 4360,1540 4380,1370 4440,1700 4450,1450 4490,1850 4510,1620 4520,1930 4545,1440'].forEach(function (p) {
    line(price, p, '#fff', 1, '5 3');
});

var lastX = 0;
candles.split(',').forEach(function (c) {
    var v = c.split(' ');
    var x = Number(v[0]);
    var up = v[3] === 'r';
    var color = up ? '#e8190c' : '#1464c8';
    var edge = up ? step[v[1]] : step[v[2]];
    rect(price, x - 3, step[v[1]], x + 3, step[v[2]], 'none', color);
    // flat ticks since the previous candle
    if (x - lastX > 9 && x - lastX < 60) {
        line(price, (lastX + 5) + ',' + edge + ' ' + (x - 3) + ',' + edge, color, 1);
    }
    lastX = x;
});

// short average, red when rising and blue when falling
var trend = '120,1160 135,1310 165,1290 182,1150 190,1220 197,1470 205,1600 215,1810 235,1800 253,2120 270,1840 285,1500 300,1560 320,1600 343,1770 355,1550 370,1350 400,1230 415,1050 432,980 462,1060 485,970 500,750 512,670 530,690 550,620 570,560 583,410 600,520 620,960 640,1050 655,1250 670,1620 690,1510 720,1550 750,1770 780,1500 815,1575 840,1540 860,1830 880,2030 900,2170 920,2010 940,1740 965,1640 990,1700 1010,1830 1040,1910 1060,1750 1080,1400 1100,1200 1120,1180 1145,1040 1170,1000 1190,830 1205,650 1222,700 1240,1020 1255,1150 1270,1400 1290,1230 1320,1320 1345,1430 1370,1500 1390,1440 1420,1480 1430,1180 1450,910 1480,820 1505,820 1525,700 1545,560 1568,470 1583,240 1600,300 1625,480 1650,560 1690,760 1740,900 1765,905 1790,860 1815,795 1850,740 1875,770 1900,740 1915,520 1950,500 1990,455 2013,310 2040,390 2070,300 2090,260 2115,200 2140,320 2165,380 2190,470 2210,530 2240,810 2260,850 2290,800 2310,740 2340,670 2355,650 2380,740 2410,840 2430,880 2450,1000 2475,1100 2500,1190 2540,1120 2570,1290 2590,1260 2605,1335 2625,1280 2645,1090 2670,1190 2700,1180 2716,1110 2745,1200 2765,1330 2790,1430 2810,1600 2835,1670 2850,1640 2865,1660 2885,1560 2910,1370 2930,1400 2960,1510 2977,1440 2993,1490 3005,1440 3022,1500 3040,1440 3060,1400 3080,1200 3100,1100 3120,960 3136,870 3150,720 3180,740 3215,760 3240,540 3260,580 3275,780 3300,930 3350,650 3375,800 3390,930 3420,740 3450,650 3470,690 3500,660 3530,740 3560,710 3575,660 3595,770 3640,725 3690,750 3700,650 3720,450 3750,430 3780,510 3810,330 3830,300 3857,285 3870,420 3890,600 3910,670 3940,655 3955,470 3970,480 3985,500 4010,430 4040,450 4060,410 4095,390 4115,350 4140,380 4160,310 4180,300 4200,370 4260,390 4285,470 4310,420 4340,610 4365,550 4380,620 4400,580 4420,640 4440,740 4460,670 4480,760 4510,860 4527,950 4545,890'.split(' ');
for (var i = 1; i < trend.length; i++) {
    var from = trend[i - 1].split(',').map(Number);
    var to = trend[i].split(',').map(Number);
    var rising = to[1] < from[1];
    var half = Math.abs(to[1] - from[1]) > 70 ? 7 : 3;
    // the wedge is widest in the middle of the move
    var midX = (from[0] + to[0]) / 2;
    var midY = (from[1] + to[1]) / 2;
    area(price, [from[0], from[1], midX + half, midY, to[0], to[1], midX - half, midY].join(' '), rising ? '#ff0000' : '#0000ff');
    line(price, trend[i - 1] + ' ' + trend[i], rising ? '#ff0000' : '#0000ff', 2);
    line(price, (from[0] + 4) + ',' + (from[1] + 3) + ' ' + (to[0] + 4) + ',' + (to[1] + 3), '#0000c8', 1);
}

// buy arrows
[[265, 690, 3136, '#00ff00'], [508, 687, 3136, '#00ff00'], [571, 560, 0, '#800080'], [508, 687, 0, '#800080']].forEach(function (a) {
    var x = a[0] + a[2];
    var y = a[1];
    area(price, [x, y - 14, x + 11, y, x + 6, y, x + 6, y + 12, x - 6, y + 12, x - 6, y, x - 11, y].join(' '), a[3]);
});

// fixed levels
line(price, '120,120 4562,120', '#808080', 2);
line(price, '120,142 4562,142', '#f00', 1);
line(price, '120,901 4562,901', '#993300', 3);
line(price, '120,2191 4562,2191', '#00ff00', 7);
line(price, '233,2201 240,2323 4562,2323', '#c0c0c0', 6);
line(price, '120,2323 4562,2323', '#00f', 1);
line(price, '120,2342 4562,2342', '#808080', 2);
line(price, '120,1750 4562,1750', '#e00000', 1);
line(price, '3049,20 3049,2412', '#f00', 1);
rect(price, 4562, 20, 4570, 900, '#e8190c');
rect(price, 4562, 900, 4570, 2406, '#1455c8');

// OBV against its signal
area(volume, '120,498 122,90 126,440 130,300 150,305 178,310 185,265 205,275 207,290 230,290 235,245 270,245 285,215 300,240 320,230 330,180 340,165 350,178 375,150 383,85 392,130 394,165 380,190 340,222 300,245 230,292 205,290 180,360 133,470', '#ff9900');
area(volume, '448,190 465,178 480,190 490,205 505,205 510,188 560,187 520,197 485,210', '#ff9900');
area(volume, '708,288 715,272 760,268 800,250 820,260 760,285', '#ff9900');
area(volume, '943,325 950,298 1000,305 1008,225 1030,220 1045,130 1057,135 1062,235 1030,280 1000,312', '#ff9900');
area(volume, '1325,250 1328,215 1342,218 1345,232 1405,232 1350,248', '#ff9900');
area(volume, '2142,432 2145,395 2175,393 2210,402', '#ff9900');
area(volume, '2458,405 2460,372 2528,372 2532,342 2540,350 2570,350 2570,362', '#ff9900');
area(volume, '2040,453 2085,430 2140,432 2080,445', '#ff9900');
area(volume, '80,482 120,498 120,510 80,512', '#00f');
area(volume, '395,163 415,163 440,180 447,190 441,280 432,218 405,215', '#00f');
area(volume, '563,190 640,262 700,288 695,300 640,290 632,255 605,262 570,262', '#00f');
area(volume, '815,260 870,275 942,328 940,337 905,337 900,325 872,325 865,295 855,300 828,300', '#00f');
area(volume, '1065,240 1085,212 1110,213 1130,225 1160,262 1200,272 1150,277 1130,255 1070,250', '#00f');
area(volume, '1412,235 1480,262 1530,290 1478,297 1472,265 1415,262', '#00f');
area(volume, '1625,295 1700,325 1780,378 1702,380 1700,340 1660,340 1655,315', '#00f');
area(volume, '1835,392 1850,400 1920,442 1890,447 1880,435 1845,438', '#00f');
area(volume, '1955,442 2010,452 1960,453', '#00f');
area(volume, '2572,362 2610,362 2650,378 2580,376', '#00f');
area(volume, '2872,376 2950,418 2875,415', '#00f');
area(volume, '2990,425 3022,428 3012,452 2998,435', '#00f');
line(volume, '80,470 120,484 150,475 220,435 300,375 380,305 430,262 470,232 560,205 630,205 700,220 750,242 820,247 880,268 940,287 1000,293 1060,278 1130,273 1200,277 1260,266 1350,250 1420,256 1500,261 1568,262 1640,270 1720,295 1800,330 1870,355 1950,390 2020,415 2100,432 2150,437 2220,435 2320,420 2400,410 2500,395 2600,387 2700,380 2800,373 2870,372 2950,385 3028,398', '#993300', 3);
line(volume, '80,480 120,498 133,470 180,360 205,290 230,292 300,245 340,222 380,190 395,163 415,163 440,180 480,210 520,195 560,190 580,205 640,262 700,288 760,285 820,260 870,275 940,328 1000,312 1030,275 1050,240 1085,212 1110,215 1160,265 1200,272 1320,258 1400,232 1420,235 1480,265 1530,290 1568,293 1630,297 1700,325 1770,375 1840,390 1920,440 2000,450 2050,453 2130,440 2200,402 2300,398 2400,405 2470,407 2540,370 2570,360 2630,378 2750,375 2870,374 2940,415 2990,425 3028,430', '#0000ff', 2);

// volume bars: the small ones repeat in a loose pattern
for (var x = 84, n = 0; x < 3025; x += 5, n++) {
    var size = [2, 5, 3, 12, 3, 8, 2, 4, 18, 3, 6][(n * 7 + (n >> 3)) % 11];
    if (x < 400) {
        size = size * 2;
    }
    rect(volume, x, 530 - size, x + 4, 530, 'none', n % 3 === 1 ? '#1464c8' : '#e8190c');
}
[[124, 85], [159, 433], [183, 485], [232, 488], [278, 490], [303, 415], [333, 483], [342, 488], [381, 450], [394, 448], [430, 500], [448, 423], [565, 497], [634, 497], [750, 493], [872, 490], [948, 493], [1006, 448], [1045, 460], [1060, 427], [1268, 500], [1327, 485], [1415, 497], [1475, 493], [1572, 505], [1620, 500], [1658, 498], [1701, 487], [1841, 485], [2143, 490], [2460, 487], [2530, 497], [2560, 502], [2587, 502], [2872, 475], [2998, 500]].forEach(function (v) {
    rect(volume, v[0] - 2, v[1], v[0] + 2, 530, '#fff', '#e8190c');
});
rect(volume, 128, 295, 131, 530, 'none', '#1464c8');
line(volume, '2033,45 2033,532', '#f00', 1);
```
